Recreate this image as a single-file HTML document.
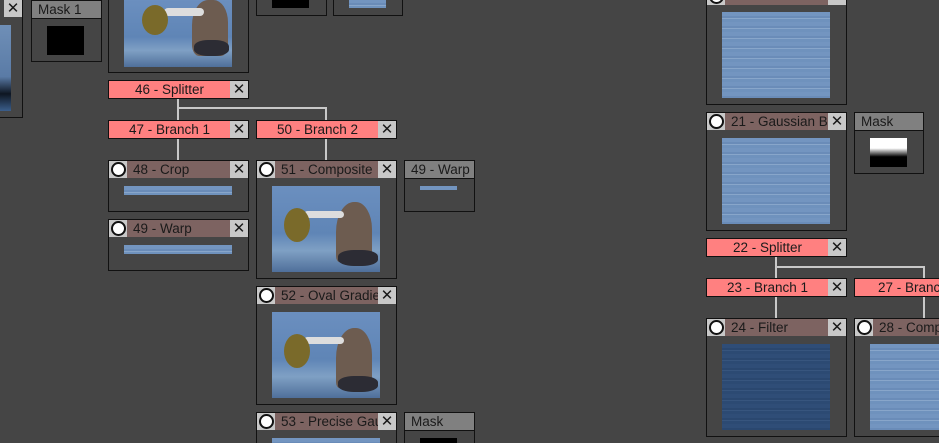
<!DOCTYPE html>
<html style="overflow:hidden;width:939px;height:443px"><head><meta charset="utf-8"><style>
body{margin:0;width:939px;height:443px;background:#454545;overflow:hidden;position:relative;font-family:"Liberation Sans",sans-serif;font-size:13.5px;color:#1a1a1a}
.n{position:absolute;border:1px solid #111;box-sizing:border-box;background:#454545}
.h{position:absolute;left:0;top:0;right:0;height:17px;background:#7d6361;line-height:18px;white-space:nowrap;overflow:hidden}
.h.p{background:#ff8080;text-align:center;padding-right:18px}
.h.g{background:#808080;padding-left:6px;border-bottom:1px solid #111}
.h .t{position:absolute;left:24px;top:0}
.c{position:absolute;left:0;top:0;width:18px;height:17px;background:#c8c8c8}
.c:after{content:"";position:absolute;left:2px;top:1px;width:11px;height:11px;border:2px solid #111;border-radius:50%;background:#fff}
.x{position:absolute;right:0;top:0;width:18px;height:17px;background:#c8c8c8;text-align:center;line-height:17px;font-size:15px}
.im{position:absolute}
.w{background:repeating-linear-gradient(180deg,#7395c0 0 4px,#6a8cb8 4px 6px,#88a6ca 6px 7px,#6f92bd 7px 10px)}
.wd{background:repeating-linear-gradient(180deg,#2f4d77 0 4px,#2a476f 4px 6px,#37557e 6px 7px,#2c4a73 7px 10px)}
.loon{background:linear-gradient(180deg,#6b8fbf 0%,#5f85b6 55%,#7fa0c4 75%,#4f6f9a 100%);overflow:hidden}
.loon i{position:absolute;display:block}
.ln{position:absolute;background:#c8c8c8}
</style></head><body>

<div class="n" style="left:-120px;top:-1px;width:143px;height:119px"><div class="x">✕</div><div class="im" style="left:110px;top:25px;width:20px;height:86px;background:linear-gradient(180deg,#6f8fb7,#5a7ba6 60%,#0e1622 80%,#3b5e8b)"></div></div>
<div class="n" style="left:31px;top:0;width:71px;height:62px"><div class="h g">Mask 1</div><div class="im" style="left:15px;top:25px;width:37px;height:29px;background:#000"></div></div>
<div class="n" style="left:108px;top:-30px;width:141px;height:103px"><div class="im loon" style="left:15px;top:29px;width:108px;height:67px"><i style="left:68px;top:0;width:36px;height:56px;background:#6d5c50;border-radius:45% 40% 20% 20%"></i><i style="left:40px;top:8px;width:40px;height:8px;background:#ddd;border-radius:4px"></i><i style="left:18px;top:5px;width:26px;height:30px;background:#7a6a2a;border-radius:50%"></i><i style="left:70px;top:40px;width:35px;height:16px;background:#2c2c34;border-radius:40%"></i></div></div>
<div class="n" style="left:256px;top:-10px;width:71px;height:26px"><div class="im" style="left:15px;top:8px;width:37px;height:9px;background:#000"></div></div>
<div class="n" style="left:333px;top:-10px;width:70px;height:26px"><div class="im w" style="left:15px;top:8px;width:37px;height:9px"></div></div>

<div class="ln" style="left:177px;top:98px;width:2px;height:22px"></div>
<div class="ln" style="left:177px;top:107px;width:150px;height:2px"></div>
<div class="ln" style="left:325px;top:107px;width:2px;height:13px"></div>
<div class="ln" style="left:177px;top:138px;width:2px;height:22px"></div>
<div class="ln" style="left:325px;top:138px;width:2px;height:22px"></div>

<div class="n" style="left:108px;top:80px;width:141px;height:19px"><div class="h p">46 - Splitter</div><div class="x">✕</div></div>
<div class="n" style="left:108px;top:120px;width:141px;height:19px"><div class="h p">47 - Branch 1</div><div class="x">✕</div></div>
<div class="n" style="left:256px;top:120px;width:141px;height:19px"><div class="h p">50 - Branch 2</div><div class="x">✕</div></div>

<div class="n" style="left:108px;top:160px;width:141px;height:52px"><div class="h"><div class="c"></div><span class="t">48 - Crop</span></div><div class="x">✕</div><div class="im w" style="left:15px;top:25px;width:108px;height:9px"></div></div>
<div class="n" style="left:108px;top:219px;width:141px;height:52px"><div class="h"><div class="c"></div><span class="t">49 - Warp</span></div><div class="x">✕</div><div class="im w" style="left:15px;top:25px;width:108px;height:9px"></div></div>

<div class="n" style="left:256px;top:160px;width:141px;height:119px"><div class="h"><div class="c"></div><span class="t">51 - Composite</span></div><div class="x">✕</div><div class="im loon" style="left:15px;top:25px;width:108px;height:86px"><i style="left:64px;top:16px;width:36px;height:60px;background:#6d5c50;border-radius:50% 45% 10% 10%"></i><i style="left:32px;top:25px;width:40px;height:7px;background:#ddd;border-radius:4px"></i><i style="left:12px;top:22px;width:26px;height:34px;background:#7a6a2a;border-radius:50%"></i><i style="left:66px;top:64px;width:40px;height:16px;background:#2c2c34;border-radius:40%"></i></div></div>
<div class="n" style="left:404px;top:160px;width:71px;height:52px"><div class="h g">49 - Warp</div><div class="im w" style="left:15px;top:25px;width:37px;height:4px"></div></div>

<div class="n" style="left:256px;top:286px;width:141px;height:119px"><div class="h"><div class="c"></div><span class="t">52 - Oval Gradie</span></div><div class="x">✕</div><div class="im loon" style="left:15px;top:25px;width:108px;height:86px"><i style="left:64px;top:16px;width:36px;height:60px;background:#6d5c50;border-radius:50% 45% 10% 10%"></i><i style="left:32px;top:25px;width:40px;height:7px;background:#ddd;border-radius:4px"></i><i style="left:12px;top:22px;width:26px;height:34px;background:#7a6a2a;border-radius:50%"></i><i style="left:66px;top:64px;width:40px;height:16px;background:#2c2c34;border-radius:40%"></i></div></div>
<div class="n" style="left:256px;top:412px;width:141px;height:40px"><div class="h"><div class="c"></div><span class="t">53 - Precise Gau</span></div><div class="x">✕</div><div class="im w" style="left:15px;top:25px;width:108px;height:20px"></div></div>
<div class="n" style="left:404px;top:412px;width:71px;height:40px"><div class="h g">Mask</div><div class="im" style="left:15px;top:25px;width:37px;height:20px;background:#000"></div></div>

<div class="n" style="left:706px;top:-13px;width:141px;height:118px"><div class="h"><div class="c"></div></div><div class="x">✕</div><div class="im w" style="left:15px;top:24px;width:108px;height:86px"></div></div>
<div class="n" style="left:706px;top:112px;width:141px;height:119px"><div class="h"><div class="c"></div><span class="t">21 - Gaussian B</span></div><div class="x">✕</div><div class="im w" style="left:15px;top:25px;width:108px;height:86px"></div></div>
<div class="n" style="left:854px;top:112px;width:70px;height:62px"><div class="h g">Mask</div><div class="im" style="left:15px;top:25px;width:37px;height:29px;background:linear-gradient(180deg,#fff 0,#fff 35%,#000 65%,#000)"></div></div>

<div class="ln" style="left:775px;top:256px;width:2px;height:22px"></div>
<div class="ln" style="left:775px;top:266px;width:150px;height:2px"></div>
<div class="ln" style="left:923px;top:266px;width:2px;height:12px"></div>
<div class="ln" style="left:775px;top:296px;width:2px;height:22px"></div>
<div class="ln" style="left:923px;top:296px;width:2px;height:22px"></div>

<div class="n" style="left:706px;top:238px;width:141px;height:19px"><div class="h p">22 - Splitter</div><div class="x">✕</div></div>
<div class="n" style="left:706px;top:278px;width:141px;height:19px"><div class="h p">23 - Branch 1</div><div class="x">✕</div></div>
<div class="n" style="left:854px;top:278px;width:85px;height:19px;border-right:0"><div class="h p" style="text-align:left;padding-left:23px;padding-right:0">27 - Branch 2</div></div>
<div class="n" style="left:706px;top:318px;width:141px;height:119px"><div class="h"><div class="c"></div><span class="t">24 - Filter</span></div><div class="x">✕</div><div class="im wd" style="left:15px;top:25px;width:108px;height:86px"></div></div>
<div class="n" style="left:854px;top:318px;width:85px;height:119px;border-right:0"><div class="h"><div class="c"></div><span class="t">28 - Composite</span></div><div class="im w" style="left:15px;top:25px;width:70px;height:86px"></div></div>
</body></html>
